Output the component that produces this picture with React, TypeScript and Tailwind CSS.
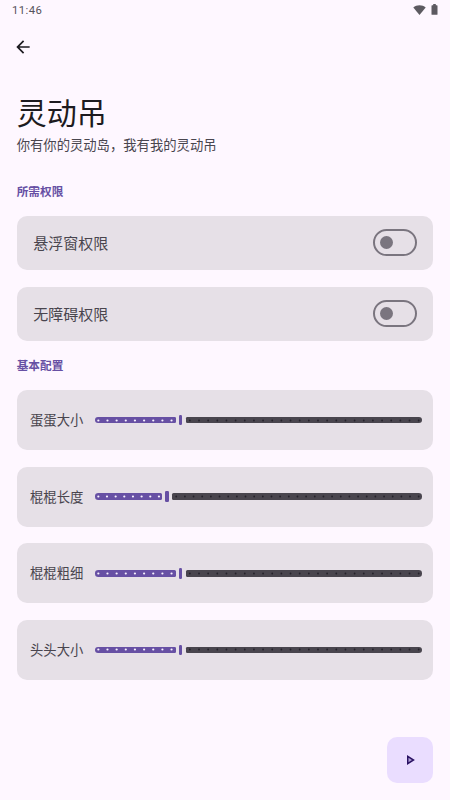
import React, { useState } from 'react';

interface PermissionCardProps {
  label: string;
}

interface SliderCardProps {
  label: string;
  value: number;
  steps: number;
}

const PERMISSIONS = ['悬浮窗权限', '无障碍权限'];

const SLIDERS: SliderCardProps[] = [
  { label: '蛋蛋大小', value: 9, steps: 35 },
  { label: '棍棍长度', value: 8, steps: 37 },
  { label: '棍棍粗细', value: 9, steps: 35 },
  { label: '头头大小', value: 9, steps: 35 },
];

// Track geometry, in px
const TRACK_WIDTH = 327;
const TRACK_INSET = 3.33;
const THUMB_WIDTH = 3.33;
const THUMB_GAP = 3;

function StatusBar() {
  return (
    <div className="flex h-5 items-center justify-between pl-3 pr-3">
      <span className="pt-[2px] font-['Roboto'] text-[11.3px] leading-[18px] tracking-[0.4px] text-[#57535b]">11:46</span>
      <div className="flex items-center gap-[5px] text-[#5d5a61]">
        <svg width="13" height="10" viewBox="0 0 13 10" fill="currentColor">
          <path d="M6.5 10 0.3 2.4C2 1 4.1 0.2 6.5 0.2S11 1 12.7 2.4Z" />
        </svg>
        <svg className="-mt-px" width="7" height="11" viewBox="0 0 7 11" fill="currentColor">
          <path d="M2.2 0h2.6v1.2h1.1q.6 0 .6.6v8.4q0 .6-.6.6H1.1q-.6 0-.6-.6V1.8q0-.6.6-.6h1.1Z" />
        </svg>
      </div>
    </div>
  );
}

function PermissionCard({ label }: PermissionCardProps) {
  const [checked, setChecked] = useState(false);

  return (
    <div className="flex h-[54px] items-center justify-between rounded-[10px] bg-[#e6e0e7] px-[16.67px]">
      <span className="text-[15px] text-[#49454e]">{label}</span>
      <button
        type="button"
        role="switch"
        aria-checked={checked}
        aria-label={label}
        onClick={() => setChecked(!checked)}
        className={`mb-px flex h-[27px] w-[43.67px] items-center rounded-full border-2 border-[#7a757f] px-[4.67px] ${checked ? 'justify-end' : 'justify-start'}`}
      >
        <span className="size-[13.5px] rounded-full bg-[#7a757f]" />
      </button>
    </div>
  );
}

function SliderCard({ label, value, steps }: SliderCardProps) {
  const thumb = (value / steps) * (TRACK_WIDTH - THUMB_WIDTH) + THUMB_WIDTH / 2;
  const activeWidth = thumb - THUMB_WIDTH / 2 - THUMB_GAP + 0.4;
  const stepWidth = (TRACK_WIDTH - TRACK_INSET * 2) / steps;
  const ticks = Array.from({ length: steps + 1 }, (_, i) => ({
    x: TRACK_INSET + i * stepWidth,
    active: i < value,
  })).filter((t) => Math.abs(t.x - thumb) > 5);

  return (
    <div className="flex h-[60px] items-center rounded-[10px] bg-[#e6e0e7] pl-[13.33px] pr-[11px]">
      <span className="w-[65px] shrink-0 text-[13.33px] text-[#49454e]">{label}</span>
      <div className="relative flex h-[11px] w-[327px] items-center gap-[3px]">
        <div className="h-[6.67px] rounded-l-[3.33px] rounded-r-[1.5px] bg-[#6750a4]" style={{ width: activeWidth }} />
        <div className="h-[10.5px] w-[3.33px] shrink-0 rounded-[1.2px] bg-[#6750a4]" />
        <div className="ml-[0.8px] h-[6.67px] flex-1 rounded-l-[1.5px] rounded-r-[3.33px] bg-[#49454e]" />
        {/* step ticks */}
        <svg className="absolute inset-0" width="327" height="11" viewBox="0 0 327 11">
          {ticks.map((t) => (
            <circle key={t.x} cx={t.x} cy="5.5" r={t.active ? 1.1 : 0.9} fill={t.active ? '#f8f2ff' : '#25222b'} />
          ))}
        </svg>
      </div>
    </div>
  );
}

export default function App() {
  return (
    <div className="flex h-[800px] w-[450px] flex-col overflow-hidden bg-[#fef7ff] font-['Noto_Sans_CJK_SC','Noto_Sans',sans-serif]">
      <StatusBar />

      <header className="flex h-[53px] items-center pl-[13.33px]">
        <button type="button" aria-label="返回" className="text-[#1d1b20]">
          <svg width="20" height="20" viewBox="0 0 24 24" fill="currentColor">
            <path d="M20 11H7.83l5.59-5.59L12 4l-8 8 8 8 1.41-1.41L7.83 13H20v-2z" />
          </svg>
        </button>
      </header>

      <main className="px-[16.67px]">
        <div className="pt-[18px]">
          <h1 className="h-11 text-[30px] leading-[40px] text-[#1d1b20]">灵动吊</h1>
          <p className="h-5 text-[13.33px] leading-5 text-[#49454e]">你有你的灵动岛，我有我的灵动吊</p>
        </div>

        <h2 className="mt-7 h-[33px] text-[11.67px] font-semibold leading-4 text-[#6750a4]">所需权限</h2>
        <div className="flex flex-col gap-[17px]">
          {PERMISSIONS.map((label) => (
            <PermissionCard key={label} label={label} />
          ))}
        </div>

        <h2 className="mt-4 h-[33px] text-[11.67px] font-semibold leading-4 text-[#6750a4]">基本配置</h2>
        <div className="flex flex-col gap-[16.67px]">
          {SLIDERS.map((slider) => (
            <SliderCard key={slider.label} {...slider} />
          ))}
        </div>
      </main>

      {/* start button */}
      <div className="mt-auto flex justify-end pb-[16.67px] pr-[16.67px]">
        <button
          type="button"
          aria-label="启动"
          className="flex size-[46.67px] items-center justify-center rounded-[10px] bg-[#eaddff] text-[#2b1264]"
        >
          <svg width="20" height="20" viewBox="0 0 24 24" fill="#b09fd6" stroke="currentColor" strokeWidth="1.8">
            <path d="M9.3 7.6v8.8l6.9-4.4z" />
          </svg>
        </button>
      </div>
    </div>
  );
}
